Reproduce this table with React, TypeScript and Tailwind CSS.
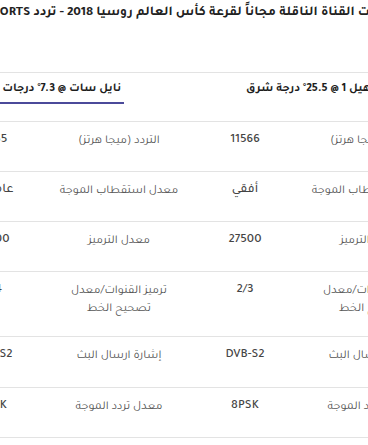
import React from "react";

type Row = { label: string[]; value: string; h: string };

const rowsA: Row[] = [
  { label: ["التردد (ميجا هرتز)"], value: "11566", h: "h-[50px]" },
  { label: ["معدل استقطاب الموجة"], value: "أفقي", h: "h-[50px]" },
  { label: ["معدل الترميز"], value: "27500", h: "h-[50px]" },
  { label: ["ترميز القنوات/معدل", "تصحيح الخط"], value: "2/3", h: "h-[65px]" },
  { label: ["إشارة ارسال البث"], value: "DVB-S2", h: "h-[51px]" },
  { label: ["معدل تردد الموجة"], value: "8PSK", h: "h-[50px]" },
];

const rowsB: Row[] = [
  { label: ["التردد (ميجا هرتز)"], value: "11765", h: "h-[50px]" },
  { label: ["معدل استقطاب الموجة"], value: "عامودي", h: "h-[50px]" },
  { label: ["معدل الترميز"], value: "27500", h: "h-[50px]" },
  { label: ["ترميز القنوات/معدل", "تصحيح الخط"], value: "3/4", h: "h-[65px]" },
  { label: ["إشارة ارسال البث"], value: "DVB-S2", h: "h-[51px]" },
  { label: ["معدل تردد الموجة"], value: "8PSK", h: "h-[50px]" },
];

function Table({
  title,
  rows,
  active,
  headPad,
}: {
  title: string;
  rows: Row[];
  active?: boolean;
  headPad: string;
}) {
  return (
    <div className="w-[252px] shrink-0">
      <div className={"h-[50px] border-y border-[#e3e3e3] pt-[4px] text-center whitespace-nowrap " + headPad}>
        <span
          className={
            "inline-block whitespace-nowrap px-[3px] pb-[3px] text-[12px] leading-[20px] font-bold text-[#1e1e1e] border-b-2 " +
            (active ? "border-[#4b4a9a]" : "border-transparent")
          }
        >
          {title}
        </span>
      </div>
      {rows.map((r, i) => (
        <div key={i} className={"grid grid-cols-2 border-b border-[#e3e3e3] " + r.h}>
          <div className="pt-[10px] text-center text-[12px] leading-[18px] text-[#555]">
            {r.label.map((l, j) => (
              <div key={j} className="whitespace-nowrap">{l}</div>
            ))}
          </div>
          <div className="pt-[10px] text-center text-[13px] leading-[18px] font-medium text-[#444] whitespace-nowrap">
            {r.value}
          </div>
        </div>
      ))}
    </div>
  );
}

export default function App() {
  return (
    <div
      className="w-[368px] h-[445px] overflow-hidden bg-white"
      style={{ fontFamily: "Tajawal, 'Noto Sans Arabic', sans-serif" }}
    >
      <div dir="rtl" className="ml-[-70px] w-[504px]">
        <h1 className="h-[72px] whitespace-nowrap pr-[37px] text-[13.5px] leading-[26px] font-bold text-[#222]">
          ترددات القناة الناقلة مجاناً لقرعة كأس العالم روسيا 2018 - تردد beIN SPORTS
        </h1>
        <div className="flex">
          <Table title="سهيل 1 @ 25.5° درجة شرق" rows={rowsA} headPad="pl-[14px]" />
          <Table title="نايل سات @ 7.3° درجات غرب" rows={rowsB} active headPad="pr-[14px]" />
        </div>
      </div>
    </div>
  );
}
